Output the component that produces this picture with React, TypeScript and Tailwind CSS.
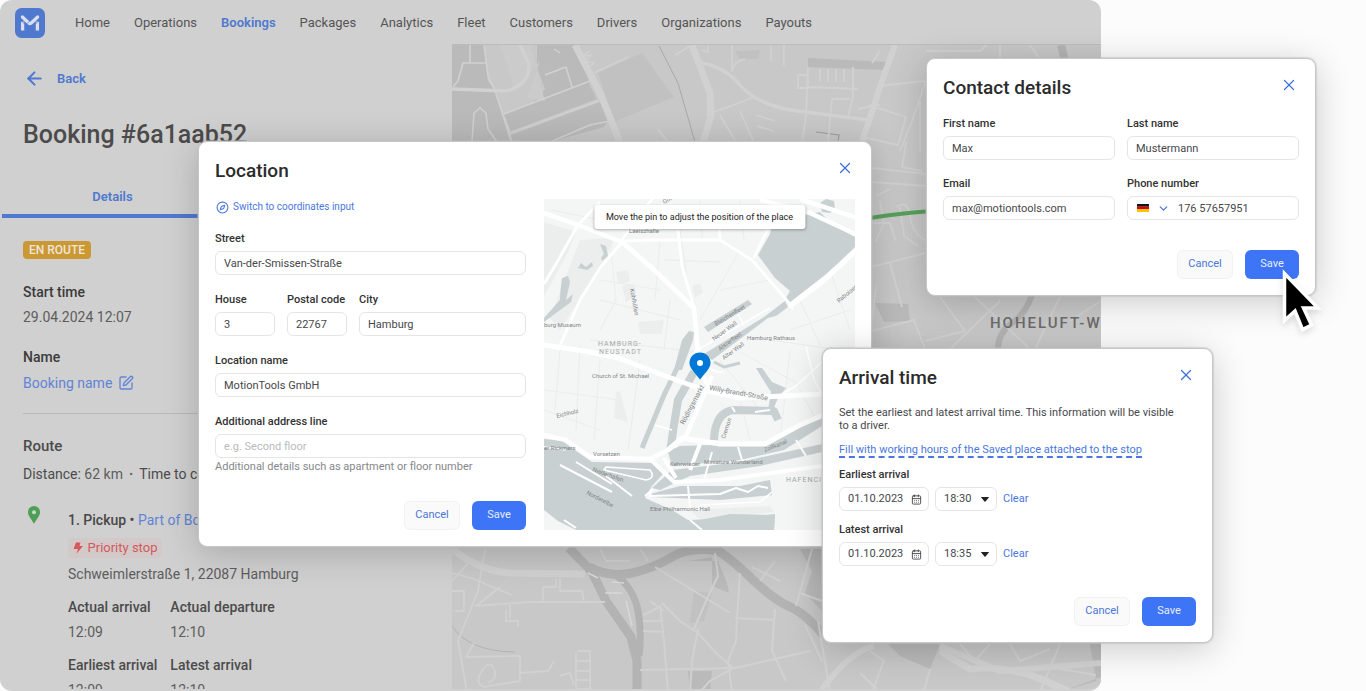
import React, { useId } from "react";
import { ArrowLeft, CalendarDays, ChevronDown, Compass, SquarePen, X } from "lucide-react";

const navItems = [
  "Home",
  "Operations",
  "Bookings",
  "Packages",
  "Analytics",
  "Fleet",
  "Customers",
  "Drivers",
  "Organizations",
  "Payouts",
];

function Logo() {
  return (
    <svg viewBox="0 0 30 30" className="size-[30px]" role="img" aria-label="MotionTools">
      <rect width="30" height="30" rx="6.5" fill="#4f78cf" />
      <g fill="none" stroke="#d9dfee" strokeWidth="3.3">
        <path d="M7.400 9 14 15.200q1 .8 2 0L22.600 9" strokeLinejoin="round" strokeLinecap="round" />
        <path d="M7.600 13.500V22.400M22.400 13.500V22.400" />
      </g>
      <path d="M5.500 12.300 10 16.200M24.500 12.300 20 16.200" stroke="#4f78cf" strokeWidth=".8" />
      <path d="M12 15.600 16.500 11.200" stroke="#4f78cf" strokeWidth=".7" />
    </svg>
  );
}

function CityMap() {
  return (
    <svg
      viewBox="452 44 649 647"
      preserveAspectRatio="xMinYMin slice"
      className="absolute inset-0 h-full w-full"
      aria-hidden="true"
    >
      <rect x="452" y="44" width="1000" height="900" fill="#c8c8c8" />
      <g fill="#bababa">
        <path d="M452 44H484L488 80 495 90 510 141H452Z" />
        <path d="M537 44H575L590 82 552 96 534 101 545 88 537 66Z" />
        <path d="M504 113 588 81 597 98 511 130Z" />
        <path d="M511 134 600 101 609 118 604 126 550 141H510Z" />
        <path d="M808 57 887 61 884 69 808 66Z" />
        <path d="M875 302 908 303 910 320 884 321Z" />
        <path d="M800 548 822 548V610L805 592 812 570Z" />
        <path d="M688 560 712 556 712 585 729 592 727 582 718 560Z" />
        <path d="M688 670 712 670 710 691 690 691Z" />
        <path d="M888 643H940L930 668 900 655Z" />
        <path d="M1060 691 1101 676V643H1090L1096 680Z" />
      </g>
      <g fill="#c1c1c1">
        <path d="M598 72 642 52 674 96 614 121Z" />
        <path d="M735 50 760 49 758 58 740 58Z" />
        <path d="M694 590 712 592 704 620 690 622Z" />
      </g>
      <path d="M540 60 527 97 545 100 530 44H500L515 90Z" fill="#cbcbcb" />
      <g fill="none" stroke="#b3b3b3" strokeLinecap="butt">
        <path d="M569 547 592 571 606 600 631 636 637 660V691" strokeWidth="9" />
        <path d="M589 566Q610 577 632 572T672 556 718 550Q730 557 752 578T790 606 824 635" strokeWidth="9" />
        <path d="M616 574Q634 588 638 610T639 655" strokeWidth="7" />
        <path d="M1032 294Q1026 312 1012 322T998 348" strokeWidth="6" />
        <path d="M1061 44 1065 60" strokeWidth="8" />
        <path d="M659 45 678 82 695 141" stroke="#a9a9a9" strokeWidth="1" />
        <path d="M452 625Q468 650 514 651" strokeWidth="1" />
        <path d="M816 131 839 134 838 141" stroke="#9e9e9e" strokeWidth="1.200" />
      </g>
      <g fill="none" stroke="#d1d1d1" strokeLinejoin="round">
        <path d="M575 44 600 92 620 141M692 44 710 92 711 115 703 141" strokeWidth="7" />
        <path d="M452 88 506 90Q530 84 529 63L520 44M702 62Q725 66 740 84T790 109L868 119" strokeWidth="3.500" />
        <path d="M895 44 882 80 862 141M1101 662 1000 670 940 645M820 691Q850 650 874 645" strokeWidth="6" />
        <path d="M940 650 970 668Q1010 663 1050 682L1070 691M452 548Q480 570 510 572L585 573" strokeWidth="7" />
        <path d="M470 44V62H463L458 80 453 86M470 62H486M484 44 488 75 495 90 512 141M504 113 590 80M511 132 598 100M550 141 590 124 610 120M545 74 566 66 572 86M594 72 628 56" strokeWidth="1.600" />
        <path d="M472 141 474 112 480 107 486 112 488 128 497 141M590 50 582 55 592 54 584 60 594 62 587 68M554 48 560 52M675 54 690 45M701 49 708 51 708 44" strokeWidth="1.500" />
        <path d="M732 44V70Q734 60 745 58M771 44V60M784 44V65M706 114 755 96M720 114 736 141M740 110 754 141M808 66 806 115 802 141M808 86 858 88M853 66V96L848 116M820 68V80M828 68V81M836 68V81M844 68V81M798 74H808V87H798ZM828 141 832 98 850 98M878 85 925 80M868 104 906 116 898 144 862 136M858 108 880 104M926 80 912 120 900 150M880 50 872 62M756 114 775 120M757 125 774 130M658 128 668 141" strokeWidth="1.800" />
        <path d="M872 167 926 173M872 181 926 185M880 200 884 222 876 240M896 206Q908 198 910 215T926 240M900 206 904 235 918 245M872 266 926 252M890 262 902 306M872 330 914 319 925 348M872 222H890L896 240M906 141 902 166 922 170M920 100V150M876 286 872 320M940 296 965 330 926 340M975 296 1030 348M1060 296 1035 348M1101 300 1070 320M1000 300 950 348M876 195 890 188" strokeWidth="1.800" />
        <path d="M926 50H980L986 44M1000 59V44M1030 44 1040 58" strokeWidth="1.800" />
        <path d="M452 572 474 578 492 586 512 594M485 548 478 590 458 640 467 691M475 605 530 601 605 601M476 605 500 586M452 590H464V610H455M470 560 452 580M543 600V586H556V578M560 577V590H582L584 600M506 608V620H518V626M510 604V618M600 548 606 560 630 560M640 548 648 560M474 642 466 656 520 655V680L484 686Q474 682 482 670T494 668 488 682M520 672 548 670 554 660M578 650H590V688H576V652M576 660H590M576 670H590M576 679H590M560 675 570 672 574 684" strokeWidth="1.800" />
        <path d="M740 572 737 618 736 640 728 660 732 691M655 566 730 612M715 552 718 575 706 600 694 628M662 602 680 620 698 632 716 652 732 666M660 604 664 640 668 691M640 669 735 667 810 650M698 628 692 660 690 691M735 617 774 619M775 608 772 650 786 680M643 620 662 620M643 630 664 631M643 614 660 606M650 600 664 610M805 624 822 660M760 580 775 560M752 566 780 580M796 605 812 548M818 620 830 691M732 668 710 680 700 691M800 592 822 600M860 672 880 691M870 650 884 660 872 691M930 668 924 691M1040 691 1060 643M1060 668 1096 674M960 643 975 660 990 643M1010 643 1020 660 1050 648" strokeWidth="2" />
        <path d="M588 572 598 577M612 581 624 582M605 592H622M626 600 632 625" stroke="#d8d8d8" strokeWidth="1.500" />
      </g>
      <path d="M850 221Q885 213 935 210" fill="none" stroke="#57a05b" strokeWidth="4" />
      <text
        x="990"
        y="327"
        fill="#6c6c6c"
        className="font-['Roboto',sans-serif] text-[15px] font-medium tracking-[2px]"
      >
        HOHELUFT-WEST
      </text>
    </svg>
  );
}

function HarbourMap() {
  return (
    <svg
      viewBox="544 199 311 331"
      preserveAspectRatio="xMinYMin slice"
      className="absolute inset-0 h-full w-full"
      role="img"
      aria-label="Map of Hamburg-Neustadt"
    >
      <rect x="544" y="199" width="311" height="331" fill="#f4f5f5" />
      <g fill="#eceeee">
        <path d="M544 222 576 232 568 252 550 286 544 296Z" />
        <path d="M580 240 615 238 600 268 586 290 560 330 550 318Z" />
        <path d="M616 272 628 270 630 282 618 284ZM622 286 634 284 636 296 626 302ZM638 322 664 320 662 334 640 334Z" />
        <path d="M616 392 620 391 628 422 614 418ZM692 286 700 284 703 292 695 298Z" />
        <path d="M700 520 774 512 770 506 690 510Z" />
      </g>
      <g fill="none" stroke="#ebeded" strokeWidth="1">
        <path d="M600 300 680 320M590 340 700 352M664 260 720 262M680 230 690 300M740 250 700 320M600 280 660 290M790 330 850 310M800 300 820 345M830 270 850 330M770 340 840 350M560 350 555 410M580 345 576 430M544 390 620 400M600 360 594 440M640 360 628 450M544 410 600 430M720 360 760 410M740 352 800 385M790 350 780 440M800 390 822 430M740 400 750 440M660 240 655 300M700 200 702 240M740 200 744 240M770 280 720 290M610 240 616 300 600 330M670 300 664 350M552 210 600 220M610 205 660 225" />
      </g>
      <g fill="#c9d0d2">
        <path d="M758 255 770 234 774 217 800 215 820 212 832 224 855 237V247L798 302 788 304 786 298 790 291 775 278Z" />
        <path d="M820 203 826 199 834 201 835 210 830 213 822 212Z" />
        <path d="M704 327 748 300 752 304 708 332Z" />
        <path d="M704 354 764 317 785 301 788 307 776 316 768 318 712 360Z" />
        <path d="M674 370 682 340 689 331 694 332 693 340 682 370Z" />
        <path d="M560 300Q560 292 562 278L568 276 570 282 566 300 573 294 571 302 544 322V318Z" />
        <path d="M578 268 581 263 586 267 592 262 593 266 587 270Z" />
        <path d="M600 244 606 246 608 256 602 261 601 258 604 254Z" />
        <path d="M756 368 762 368 772 382 786 388 778 398 773 410H768L771 392 762 378Z" />
        <path d="M668 452 680 446 770 443 822 416V426L784 450 740 460 672 466Z" />
        <path d="M672 470 740 462 822 444V452L760 466 690 476 660 490 652 488Z" />
        <path d="M650 494 680 486 740 486 770 480 772 495 720 500 650 497Z" />
        <path d="M544 439 562 441 592 462 652 463 663 474 652 486 645 498 672 510 688 520 740 518 775 514 774 530H576L558 521 544 510Z" />
        <path d="M700 520 730 514 775 515 774 530H704Z" />
      </g>
      <g fill="none" stroke="#c9d0d2" strokeLinejoin="round">
        <path d="M680 362 664 395 642 448" strokeWidth="5" />
        <path d="M694 372 678 400 674 425 670 452" strokeWidth="8" />
        <path d="M714 440Q715 412 734 410L774 411 778 420" strokeWidth="8" />
        <path d="M714 362 724 367 740 363" strokeWidth="3" />
      </g>
      <g fill="none" stroke="#fff" strokeLinejoin="round">
        <path d="M544 213 578 225 622 242 652 268 694 308 698 352 706 384M544 435 566 440 590 457 650 459 668 450 686 436 712 376" strokeWidth="4.500" />
        <path d="M544 345 590 352 618 358 660 374 704 390 740 398 824 394M668 450 682 438 720 444 765 444 800 425 826 414" strokeWidth="5" />
        <path d="M622 242 600 268 580 300 558 350M578 225 600 202M578 225 556 264 544 284M652 199 622 240M625 241 648 240 720 240 752 260 790 304 826 276 855 250M678 230 682 266 694 308M720 240 719 220M770 225 754 258" strokeWidth="2.800" />
        <path d="M760 200 810 213 855 234M800 199 855 217M789 307 820 284 855 252" strokeWidth="4.500" />
        <path d="M650 459 674 482 720 480 822 466M664 458 676 478M700 444 690 470" strokeWidth="4" />
        <path d="M790 304 793 310M738 314 744 325M706 364Q712 373 724 372M822 394 814 380 806 346M824 360 796 386 782 394M694 352 770 308" strokeWidth="1.500" />
        <path d="M560 465 612 492M576 462 612 484M606 476 632 496M564 520 576 528M690 520 702 530M688 486 690 508M735 412 732 407M770 410 755 412M738 447 742 460M796 440 806 456M712 452 704 480M645 496 652 490 650 496 720 494 736 488 748 492 758 486 768 488" strokeWidth="2" />
        <path d="M606 467 650 470Q656 478 646 480L604 470ZM544 447 566 450" strokeWidth="1.600" />
        <path d="M655 425 672 430M700 505 760 502 772 492" strokeWidth="1.500" />
      </g>
      <g fill="#7f8587" className="font-['Roboto',sans-serif] text-[6px]">
        <text x="664" y="204" transform="rotate(-28 664 204)">Gorch</text>
        <text x="629" y="233">Laeiszhalle</text>
        <text x="544" y="327">burg Museum</text>
        <text x="747" y="340">Hamburg Rathaus</text>
        <text x="592" y="378">Church of St. Michael</text>
        <text x="593" y="456">Vorsetzen</text>
        <text x="670" y="466">Kehrwieder</text>
        <text x="704" y="464">Miniature Wunderland</text>
        <text x="650" y="511">Elbe Philharmonic Hall</text>
        <text x="544" y="450">er Rickmers</text>
        <text x="557" y="418" transform="rotate(-14 557 418)">Eichholz</text>
        <text x="630" y="289" transform="rotate(80 630 289)">Kohlhöfen</text>
        <text x="714" y="341" transform="rotate(-36 714 341)">Neuer Wall</text>
        <text x="724" y="360" transform="rotate(-36 724 360)">Alter Wall</text>
        <text x="716" y="326" transform="rotate(-31 716 326)">Bleichenfleet</text>
        <text x="720" y="351" transform="rotate(-36 720 351)">Alsterfleet</text>
        <text x="839" y="303" transform="rotate(-40 839 303)">Raboisen</text>
        <text x="709" y="390" transform="rotate(10 709 390)" className="text-[7px]">Willy-Brandt-Straße</text>
        <text x="684" y="425" transform="rotate(-62 684 425)" className="text-[7px]">Rödingsmarkt</text>
        <text x="725" y="439" transform="rotate(-72 725 439)">Cremon</text>
        <text x="765" y="452" transform="rotate(-22 765 452)">Zollkanal</text>
        <text x="592" y="471" transform="rotate(20 592 471)">Niederhafen</text>
        <text x="586" y="494" transform="rotate(27 586 494)">Norderelbe</text>
      </g>
      <g fill="#a3a8aa" className="font-['Roboto',sans-serif] text-[7px] tracking-[1px]">
        <text x="598" y="346">HAMBURG-</text>
        <text x="599" y="354">NEUSTADT</text>
        <text x="786" y="482">HAFENCITY</text>
      </g>
    </svg>
  );
}

function PlacePin() {
  return (
    <svg
      viewBox="0 0 22 28"
      className="absolute left-1/2 top-[153px] h-7 w-[22px] -translate-x-1/2"
      aria-hidden="true"
    >
      <path
        d="M11 .5C5 .5.500 5 .500 10.800c0 3.200 1.500 5.700 3.500 8.200L11 27.500l7-8.500c2-2.500 3.500-5 3.500-8.200C21.500 5 17 .5 11 .5Z"
        fill="#0078d7"
      />
      <circle cx="11" cy="11" r="3" fill="#fff" />
    </svg>
  );
}

const labelClass = "mb-1 block whitespace-nowrap text-[11px] font-medium leading-4 text-[#333]";

function Field({
  label,
  value,
  placeholder,
  hint,
  className = "",
}: {
  label: string;
  value?: string;
  placeholder?: string;
  hint?: string;
  className?: string;
}) {
  const id = useId();
  return (
    <div className={className}>
      <label htmlFor={id} className={labelClass}>
        {label}
      </label>
      <input
        id={id}
        className="block h-6 w-full min-w-0 rounded-md border border-[#e4e5e7] bg-white px-2 text-[11px] text-[#46484b] outline-none placeholder:text-[#b8babd] focus:border-[#3e74f6]"
        defaultValue={value}
        placeholder={placeholder}
      />
      {hint && <p className="mt-px text-[11px] leading-4 text-[#85878a]">{hint}</p>}
    </div>
  );
}

function Dialog({
  title,
  className,
  children,
}: {
  title: string;
  className: string;
  children: React.ReactNode;
}) {
  const id = useId();
  return (
    <section
      role="dialog"
      aria-labelledby={id}
      className={`absolute rounded-[9px] border border-[#c6c6c6] bg-white px-4 pb-4 pt-[17px] shadow-[0_0_1px_1px_rgba(190,190,190,0.5),0_6px_36px_rgba(0,0,0,0.2)] ${className}`}
    >
      <header className="flex items-start justify-between">
        <h2 id={id} className="text-[19px] font-medium leading-6 text-[#2b2b2b]">
          {title}
        </h2>
        <button type="button" aria-label="Close" className="mr-px text-[#3f6fd8]">
          <X className="size-[18px]" strokeWidth={1.6} />
        </button>
      </header>
      {children}
    </section>
  );
}

function Actions({ className }: { className: string }) {
  return (
    <div className={`flex justify-end gap-3 text-[11px] ${className}`}>
      <button
        type="button"
        className="h-[29px] w-14 rounded-md border border-[#f1f2f4] bg-[#fafafb] text-[#4a76d8]"
      >
        Cancel
      </button>
      <button type="button" className="h-[29px] w-[54px] rounded-md bg-[#3e74f6] text-[#e8eefe]">
        Save
      </button>
    </div>
  );
}

function LocationDialog() {
  return (
    <Dialog title="Location" className="left-[198px] top-[141px] w-[674px]">
      <div className="mt-4 flex gap-[18px]">
        <form className="w-[311px] shrink-0">
          <a href="#coordinates" className="flex items-center gap-1 text-[10px] leading-4 text-[#4a78e0]">
            <Compass className="ml-px size-[13px]" strokeWidth={2} />
            Switch to coordinates input
          </a>
          <div className="mt-4 flex flex-col gap-[17px]">
            <Field label="Street" value="Van-der-Smissen-Straße" />
            <div className="flex gap-3">
              <Field label="House" value="3" className="w-[60px]" />
              <Field label="Postal code" value="22767" className="w-[60px]" />
              <Field label="City" value="Hamburg" className="min-w-0 flex-1" />
            </div>
            <Field label="Location name" value="MotionTools GmbH" />
            <Field
              label="Additional address line"
              placeholder="e.g. Second floor"
              hint="Additional details such as apartment or floor number"
            />
          </div>
          <Actions className="mt-[26px]" />
        </form>
        <div className="relative min-w-0 flex-1 overflow-hidden">
          <HarbourMap />
          <div className="absolute left-1/2 top-[6px] -translate-x-1/2 whitespace-nowrap rounded-[3px] bg-white px-3 py-1 text-[9px] leading-4 text-[#222] shadow-[0_1px_3px_rgba(0,0,0,0.3)]">
            Move the pin to adjust the position of the place
          </div>
          <PlacePin />
        </div>
      </div>
    </Dialog>
  );
}

function ContactDialog() {
  const phoneId = useId();
  return (
    <Dialog title="Contact details" className="left-[926px] top-[58px] w-[390px]">
      <form>
        <div className="mt-4 grid grid-cols-2 gap-x-3 gap-y-4">
          <Field label="First name" value="Max" />
          <Field label="Last name" value="Mustermann" />
          <Field label="Email" value="max@motiontools.com" />
          <div>
            <label htmlFor={phoneId} className={labelClass}>
              Phone number
            </label>
            <div className="flex h-6 items-center rounded-md border border-[#e4e5e7] pl-[9px]">
              <button type="button" aria-label="Country code" className="flex items-center gap-2 text-[#4a76d8]">
                <svg viewBox="0 0 12 8" className="h-2 w-3" aria-hidden="true">
                  <path d="M0 0h12v2.700H0Z" fill="#151515" />
                  <path d="M0 2.700h12v2.600H0Z" fill="#d00" />
                  <path d="M0 5.300h12V8H0Z" fill="#ffc400" />
                </svg>
                <ChevronDown className="size-[13px]" strokeWidth={2.4} />
              </button>
              <input
                id={phoneId}
                type="tel"
                defaultValue="176 57657951"
                className="ml-2 h-full w-full min-w-0 text-[11px] text-[#46484b] outline-none"
              />
            </div>
          </div>
        </div>
        <Actions className="mt-[30px]" />
      </form>
    </Dialog>
  );
}

function ArrivalRow({ label, date, time }: { label: string; date: string; time: string }) {
  const id = useId();
  return (
    <div>
      <label htmlFor={id} className={labelClass}>
        {label}
      </label>
      <div className="flex items-center gap-[6px]">
        <div className="flex h-6 w-[90px] items-center rounded-md border border-[#e4e5e7] pl-2 pr-[6px] text-[#46484b]">
          <input id={id} defaultValue={date} className="w-full min-w-0 text-[11px] outline-none" />
          <CalendarDays className="size-[11px] shrink-0" strokeWidth={2} />
        </div>
        <div className="relative">
          <select
            aria-label={`${label} time`}
            defaultValue={time}
            className="block h-6 w-[62px] appearance-none rounded-md border border-[#e4e5e7] bg-white pl-2 text-[11px] text-[#46484b]"
          >
            <option>{time}</option>
          </select>
          <svg viewBox="0 0 8 5" className="pointer-events-none absolute right-2 top-[10px] h-[5px] w-2" aria-hidden="true">
            <path d="M.6 0h6.800q.6 0 .4.600L4.500 4.500q-.5.500-1 0L.2.600Q0 0 .6 0Z" fill="#222" />
          </svg>
        </div>
        <button type="button" className="text-[11px] text-[#4a78e0]">
          Clear
        </button>
      </div>
    </div>
  );
}

function ArrivalDialog() {
  return (
    <Dialog title="Arrival time" className="left-[822px] top-[348px] w-[391px]">
      <p className="mt-4 w-[345px] text-[11px] leading-[13px] text-[#46484b]">
        Set the earliest and latest arrival time. This information will be visible to a driver.
      </p>
      <a
        href="#working-hours"
        className="mt-3 block w-fit border-b-2 border-dashed border-[#4a78e0] text-[11px] leading-3 text-[#4a78e0]"
      >
        Fill with working hours of the Saved place attached to the stop
      </a>
      <form className="mt-[9px] flex flex-col gap-[11px]">
        <ArrivalRow label="Earliest arrival" date="01.10.2023" time="18:30" />
        <ArrivalRow label="Latest arrival" date="01.10.2023" time="18:35" />
        <Actions className="mt-5" />
      </form>
    </Dialog>
  );
}

function Sidebar() {
  return (
    <aside className="w-[452px] shrink-0 text-sm text-[#5d5d5d]">
      <a href="#bookings" className="ml-6 mt-6 flex w-fit items-center gap-3 text-[13px] font-semibold leading-4 text-[#4f78cf]">
        <ArrowLeft className="size-[21px]" strokeWidth={2.4} />
        Back
      </a>
      <h1 className="ml-[23px] mt-7 text-[25px] font-medium leading-9 text-[#4b4b4b]">Booking #6a1aab52</h1>
      <div role="tablist" className="ml-[2px] mt-9 grid grid-cols-2 pr-2">
        <button
          type="button"
          role="tab"
          aria-selected="true"
          className="h-[29px] border-b-4 border-[#4f78cf] pb-[9px] text-[13px] font-semibold leading-4 text-[#4f78cf]"
        >
          Details
        </button>
      </div>
      <div className="ml-[23px] mt-[23px]">
        <p className="w-fit rounded bg-[#cc9833] px-[6px] text-xs font-medium leading-[18px] text-[#ece6da]">
          EN ROUTE
        </p>
        <dl className="mt-[23px]">
          <dt className="font-medium leading-5 text-[#3a3a3a]">Start time</dt>
          <dd className="mt-[5px] leading-5">29.04.2024 12:07</dd>
          <dt className="mt-5 font-medium leading-5 text-[#3a3a3a]">Name</dt>
          <dd className="mt-[6px] leading-5">
            <a href="#booking-name" className="flex items-center gap-[6px] text-[#5f84d6]">
              Booking name
              <SquarePen className="size-4" strokeWidth={2} />
            </a>
          </dd>
        </dl>
        <hr className="mt-5 border-[#b9b9b9]" />
        <h2 className="mt-[22px] text-[15px] font-medium leading-5 text-[#4b4b4b]">Route</h2>
        <p className="mt-2 whitespace-nowrap leading-5">
          <span className="text-[#4b4b4b]">Distance: </span>62 km
          <span className="mx-[6px] font-bold">·</span>
          <span className="text-[#4b4b4b]">Time to complete: </span>2 h
        </p>
        <div className="mt-[22px] flex">
          <svg viewBox="0 0 12 18" className="ml-[5px] h-[18px] w-3 shrink-0" aria-hidden="true">
            <path d="M6 0a6 6 0 0 0-6 6.200C0 10 3.500 13 6 17.800 8.500 13 12 10 12 6.200A6 6 0 0 0 6 0Z" fill="#4f9e55" />
            <circle cx="6" cy="6.200" r="2" fill="#c9dcca" />
          </svg>
          <div className="ml-7">
            <p className="mt-1 whitespace-nowrap leading-5">
              <span className="font-medium text-[#484848]">1. Pickup •</span>{" "}
              <a href="#booking" className="text-[#5f84d6]">
                Part of Booking
              </a>
            </p>
            <p className="mt-2 flex h-5 w-[94px] items-center justify-center gap-[5px] whitespace-nowrap rounded bg-[#d3c9c9] text-[13px] text-[#d25a5a]">
              <svg viewBox="0 0 10 12" className="h-3 w-[10px]" aria-hidden="true">
                <path d="M3 .5h4.500L6.500 4H10L3.500 11.700 5 7H.5Z" fill="#d25a5a" />
              </svg>
              Priority stop
            </p>
            <p className="mt-[6px] leading-5">Schweimlerstraße 1, 22087 Hamburg</p>
            <dl className="mt-[13px] grid grid-cols-[auto_auto] justify-start gap-x-[13px] whitespace-nowrap leading-5">
              <dt className="font-medium text-[#4b4b4b]">Actual arrival</dt>
              <dt className="font-medium text-[#4b4b4b]">Actual departure</dt>
              <dd className="mt-[5px]">12:09</dd>
              <dd className="mt-[5px]">12:10</dd>
              <dt className="mt-[13px] font-medium text-[#4b4b4b]">Earliest arrival</dt>
              <dt className="mt-[13px] font-medium text-[#4b4b4b]">Latest arrival</dt>
              <dd className="mt-[5px]">12:09</dd>
              <dd className="mt-[5px]">12:10</dd>
            </dl>
          </div>
        </div>
      </div>
    </aside>
  );
}

export default function App() {
  return (
    <div className="relative h-screen min-h-[691px] overflow-hidden bg-[#fcfcfc] font-['Roboto','Noto_Sans',sans-serif]">
      <div className="flex h-full w-[80.6%] flex-col overflow-hidden rounded-xl border-b-2 border-[#d0d0d0] bg-[#d0d0d0]">
        <header className="flex h-11 shrink-0 items-center pl-[15px] pt-[2px]">
          <Logo />
          <nav className="ml-[30px] flex gap-6 whitespace-nowrap text-[13px] text-[#555]">
            {navItems.map((item) => (
              <a
                key={item}
                href={`#${item.toLowerCase()}`}
                aria-current={item === "Bookings" ? "page" : undefined}
                className={item === "Bookings" ? "font-semibold text-[#4f78cf]" : ""}
              >
                {item}
              </a>
            ))}
          </nav>
        </header>
        <div className="flex min-h-0 flex-1">
          <Sidebar />
          <main className="relative min-w-0 flex-1 overflow-hidden border-t border-[#bcbcbc]">
            <CityMap />
          </main>
        </div>
      </div>
      <LocationDialog />
      <ContactDialog />
      <ArrivalDialog />
      <svg
        viewBox="0 0 44 64"
        className="pointer-events-none absolute left-[1280px] top-[269px] h-16 w-11 drop-shadow-md"
        aria-hidden="true"
      >
        <path d="M4.500 4.500v47l10.500-9.500 7.500 18.500 9-4.500-8-17H38Z" fill="#000" stroke="#fff" strokeWidth="3.500" />
      </svg>
    </div>
  );
}
